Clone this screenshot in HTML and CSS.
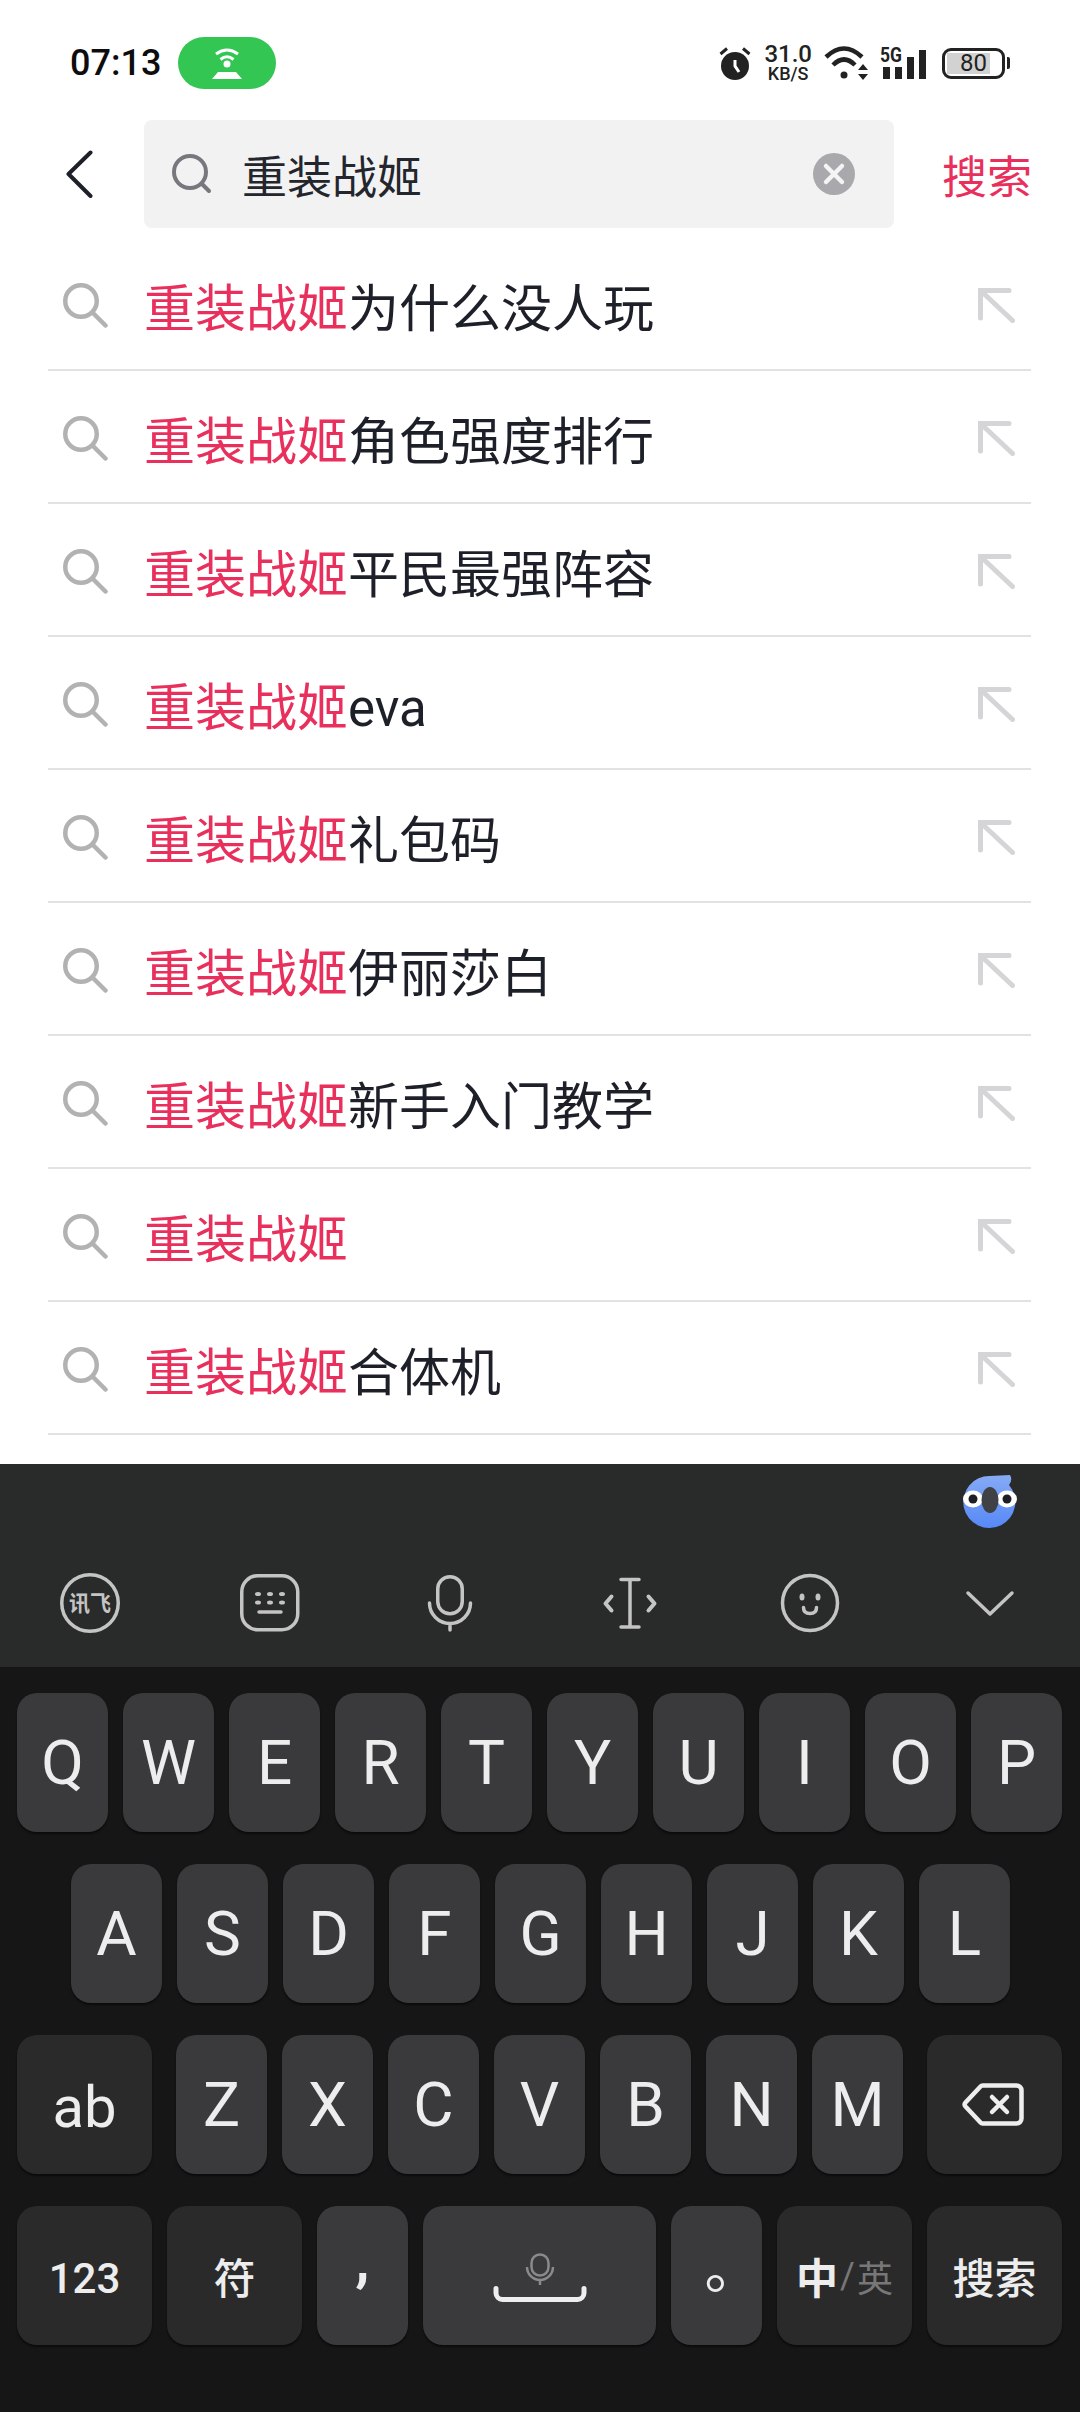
FILE: index.html
```html
<!DOCTYPE html>
<html lang="zh-CN">
<head>
    <meta charset="UTF-8">
    <meta name="viewport" content="width=device-width, initial-scale=1.0">
    <title>搜索</title>
    <link rel="stylesheet" href="styles.css">
</head>
<body>
    <svg class="sprites" aria-hidden="true">
        <symbol id="icon-search" viewBox="0 0 45 45">
            <circle cx="18" cy="18" r="15.750" fill="none" stroke="currentColor" stroke-width="4.500"/>
            <path d="M30 30L42.500 42.500" fill="none" stroke="currentColor" stroke-width="4.500" stroke-linecap="round"/>
        </symbol>
        <symbol id="icon-fill-in" viewBox="0 0 37 35">
            <path d="M2.500 30V2.500H31M2.500 2.500L34.500 32.500" fill="none" stroke="currentColor" stroke-width="5" stroke-linecap="round"/>
        </symbol>
    </svg>

    <div class="status-bar">
        <div class="status-left">
            <span class="time">07:13</span>
            <span class="hotspot-pill">
                <svg width="30" height="31" viewBox="0 0 30 31">
                    <path d="M4 6Q15-2 26 6M8.500 11.500Q15 6 21.500 11.500" fill="none" stroke="#fff" stroke-width="3"/>
                    <circle cx="15" cy="16" r="3.500" fill="#fff"/>
                    <path d="M6 24H24L30 31H0Z" fill="#fff"/>
                </svg>
            </span>
        </div>
        <div class="status-right">
            <svg width="32" height="34" viewBox="0 0 32 34">
                <circle cx="16" cy="20" r="14" fill="#222"/>
                <path d="M1.500 8L8 2.500M30.500 8L24 2.500" fill="none" stroke="#222" stroke-width="3"/>
                <path d="M16 14V20L20 26" fill="none" stroke="#fff" stroke-width="3"/>
            </svg>
            <div class="speed">
                <span class="speed-num">31.0</span>
                <span class="speed-unit">KB/S</span>
            </div>
            <svg width="44" height="34" viewBox="0 0 44 34">
                <path d="M2 11Q20-6 38 11M9 19Q20 8 31 19" fill="none" stroke="#222" stroke-width="4.500"/>
                <circle cx="20" cy="29" r="3.500" fill="#222"/>
                <path d="M34 24L39 18L44 24ZM34 28L39 34L44 28Z" fill="#222"/>
            </svg>
            <svg class="signal" width="46" height="38" viewBox="0 -6 46 38">
                <text class="signal-label" x="0" y="15" textLength="22" lengthAdjust="spacingAndGlyphs">5G</text>
                <path d="M3 20H10V32H3ZM15 20H22V32H15ZM27 10H34V32H27ZM39 3H46V32H39Z" fill="#222"/>
            </svg>
            <div class="battery-wrap">
                <div class="battery">80</div>
                <span class="battery-tip"></span>
            </div>
        </div>
    </div>

    <div class="search-row">
        <svg class="back" width="27" height="48" viewBox="0 0 27 48">
            <path d="M24.500 2.500L2.500 24L24.500 46" fill="none" stroke="#1e2029" stroke-width="4" stroke-linecap="round" stroke-linejoin="round"/>
        </svg>
        <div class="search-box">
            <svg class="search-box-icon" width="40" height="40" viewBox="0 0 40 40">
                <circle cx="18" cy="18" r="16" fill="none" stroke="#77777d" stroke-width="4"/>
                <path d="M30 30L37 37" fill="none" stroke="#77777d" stroke-width="4" stroke-linecap="round"/>
            </svg>
            <span class="search-text">重装战姬</span>
            <svg class="clear" width="42" height="42" viewBox="0 0 42 42">
                <circle cx="21" cy="21" r="21" fill="#a8a8ad"/>
                <path d="M13 13L29 29M29 13L13 29" fill="none" stroke="#f4f4f5" stroke-width="4.500" stroke-linecap="round"/>
            </svg>
        </div>
        <span class="search-btn">搜索</span>
    </div>

    <ul class="suggest-list">
        <li class="suggest-item">
            <svg class="suggest-icon"><use href="#icon-search"/></svg>
            <span class="suggest-text"><em>重装战姬</em>为什么没人玩</span>
            <svg class="fill-icon"><use href="#icon-fill-in"/></svg>
        </li>
        <li class="suggest-item">
            <svg class="suggest-icon"><use href="#icon-search"/></svg>
            <span class="suggest-text"><em>重装战姬</em>角色强度排行</span>
            <svg class="fill-icon"><use href="#icon-fill-in"/></svg>
        </li>
        <li class="suggest-item">
            <svg class="suggest-icon"><use href="#icon-search"/></svg>
            <span class="suggest-text"><em>重装战姬</em>平民最强阵容</span>
            <svg class="fill-icon"><use href="#icon-fill-in"/></svg>
        </li>
        <li class="suggest-item">
            <svg class="suggest-icon"><use href="#icon-search"/></svg>
            <span class="suggest-text"><em>重装战姬</em>eva</span>
            <svg class="fill-icon"><use href="#icon-fill-in"/></svg>
        </li>
        <li class="suggest-item">
            <svg class="suggest-icon"><use href="#icon-search"/></svg>
            <span class="suggest-text"><em>重装战姬</em>礼包码</span>
            <svg class="fill-icon"><use href="#icon-fill-in"/></svg>
        </li>
        <li class="suggest-item">
            <svg class="suggest-icon"><use href="#icon-search"/></svg>
            <span class="suggest-text"><em>重装战姬</em>伊丽莎白</span>
            <svg class="fill-icon"><use href="#icon-fill-in"/></svg>
        </li>
        <li class="suggest-item">
            <svg class="suggest-icon"><use href="#icon-search"/></svg>
            <span class="suggest-text"><em>重装战姬</em>新手入门教学</span>
            <svg class="fill-icon"><use href="#icon-fill-in"/></svg>
        </li>
        <li class="suggest-item">
            <svg class="suggest-icon"><use href="#icon-search"/></svg>
            <span class="suggest-text"><em>重装战姬</em></span>
            <svg class="fill-icon"><use href="#icon-fill-in"/></svg>
        </li>
        <li class="suggest-item">
            <svg class="suggest-icon"><use href="#icon-search"/></svg>
            <span class="suggest-text"><em>重装战姬</em>合体机</span>
            <svg class="fill-icon"><use href="#icon-fill-in"/></svg>
        </li>
    </ul>

    <div class="keyboard">
        <div class="toolbar">
            <div class="mascot-row">
                <svg width="54" height="54" viewBox="0 0 54 54">
                    <defs>
                        <linearGradient id="mascot-blue" x1="0" y1="0" x2="0" y2="1">
                            <stop offset="0" stop-color="#86aaf5"/>
                            <stop offset="1" stop-color="#5689f7"/>
                        </linearGradient>
                    </defs>
                    <path d="M27 1L47 0Q50 5 46 10A26 26 0 1 1 27 1Z" fill="url(#mascot-blue)"/>
                    <ellipse cx="10" cy="24" rx="10" ry="8.500" fill="#fff"/>
                    <ellipse cx="44" cy="24" rx="10" ry="8.500" fill="#fff"/>
                    <circle cx="10" cy="24" r="4.500" fill="#1d1f24"/>
                    <circle cx="44" cy="24" r="4.500" fill="#1d1f24"/>
                    <ellipse cx="27" cy="25" rx="8.500" ry="13" fill="#3f4145"/>
                </svg>
            </div>
            <div class="tool-row">
                <svg class="tool-icon" viewBox="0 0 60 60">
                    <circle cx="30" cy="30" r="28.250" fill="none" stroke="#c4c4c4" stroke-width="3.500"/>
                    <text class="ifly-label" x="30" y="38" text-anchor="middle" textLength="42" lengthAdjust="spacingAndGlyphs">讯飞</text>
                </svg>
                <svg class="tool-icon" viewBox="0 0 60 60">
                    <rect x="1.750" y="2.750" width="56" height="54" rx="16" fill="none" stroke="#c4c4c4" stroke-width="3.500"/>
                    <g fill="#c4c4c4">
                        <ellipse cx="18" cy="21" rx="3" ry="2"/>
                        <ellipse cx="30" cy="21" rx="3" ry="2"/>
                        <ellipse cx="42" cy="21" rx="3" ry="2"/>
                        <ellipse cx="18" cy="29.500" rx="3" ry="2"/>
                        <ellipse cx="30" cy="29.500" rx="3" ry="2"/>
                        <ellipse cx="42" cy="29.500" rx="3" ry="2"/>
                    </g>
                    <path d="M19 39H41" fill="none" stroke="#c4c4c4" stroke-width="3.500" stroke-linecap="round"/>
                </svg>
                <svg class="tool-icon" viewBox="0 0 60 60">
                    <rect x="17.750" y="3.750" width="24.500" height="37" rx="12.250" fill="none" stroke="#c4c4c4" stroke-width="3.500"/>
                    <path d="M9.500 30a20.500 20.500 0 0 0 41 0M30 50.500V57" fill="none" stroke="#c4c4c4" stroke-width="3.500" stroke-linecap="round"/>
                </svg>
                <svg class="tool-icon" viewBox="0 0 60 60">
                    <path d="M30 7V53M21 6.500H39M21 54H39" fill="none" stroke="#c4c4c4" stroke-width="3.500" stroke-linecap="round"/>
                    <path d="M11.500 23.500L5.500 30.500L11.500 37.500M48.500 23.500L54.500 30.500L48.500 37.500" fill="none" stroke="#c4c4c4" stroke-width="4" stroke-linecap="round" stroke-linejoin="round"/>
                </svg>
                <svg class="tool-icon" viewBox="0 0 60 60">
                    <circle cx="30" cy="30" r="27.500" fill="none" stroke="#c4c4c4" stroke-width="3.500"/>
                    <ellipse cx="22" cy="24" rx="2.500" ry="3.500" fill="#c4c4c4"/>
                    <ellipse cx="38" cy="24" rx="2.500" ry="3.500" fill="#c4c4c4"/>
                    <path d="M23.500 34.500q0 6 6.500 6q6.500 0 6.500-6" fill="none" stroke="#c4c4c4" stroke-width="3.500" stroke-linecap="round"/>
                </svg>
                <svg class="tool-icon" viewBox="0 0 60 60">
                    <path d="M8 20L30 41L52 20" fill="none" stroke="#c4c4c4" stroke-width="3.500" stroke-linecap="round" stroke-linejoin="round"/>
                </svg>
            </div>
        </div>

        <div class="keys">
            <div class="key-row">
                <span class="key">Q</span><span class="key">W</span><span class="key">E</span><span class="key">R</span><span class="key">T</span><span class="key">Y</span><span class="key">U</span><span class="key">I</span><span class="key">O</span><span class="key">P</span>
            </div>
            <div class="key-row key-row-inset">
                <span class="key">A</span><span class="key">S</span><span class="key">D</span><span class="key">F</span><span class="key">G</span><span class="key">H</span><span class="key">J</span><span class="key">K</span><span class="key">L</span>
            </div>
            <div class="key-row">
                <span class="key key-fn key-shift">ab</span>
                <span class="key">Z</span><span class="key">X</span><span class="key">C</span><span class="key">V</span><span class="key">B</span><span class="key">N</span><span class="key">M</span>
                <span class="key key-fn key-del">
                    <svg width="62" height="43" viewBox="0 0 62 43">
                        <path d="M21 2.500H54.500a5 5 0 0 1 5 5V35.500a5 5 0 0 1-5 5H21a3 3 0 0 1-2.500-1L3.500 23.500a3 3 0 0 1 0-4L18.500 3.500a3 3 0 0 1 2.500-1Z" fill="none" stroke="#eee" stroke-width="4.500"/>
                        <path d="M30 14L45 29M45 14L30 29" fill="none" stroke="#eee" stroke-width="4.500" stroke-linecap="round"/>
                    </svg>
                </span>
            </div>
            <div class="key-row">
                <span class="key key-fn key-label key-num">123</span>
                <span class="key key-fn key-label">符</span>
                <span class="key key-comma">,</span>
                <span class="key key-space">
                    <svg width="96" height="50" viewBox="0 0 96 50">
                        <rect x="39.500" y="1.500" width="17" height="21" rx="8.500" fill="none" stroke="#8a8a8a" stroke-width="2.500"/>
                        <path d="M35 14a13 13 0 0 0 26 0M48 27V32" fill="none" stroke="#8a8a8a" stroke-width="2.500"/>
                        <path d="M4 35.500V40a6.500 6.500 0 0 0 6.500 6.500H85.500a6.500 6.500 0 0 0 6.500-6.500V35.500" fill="none" stroke="#eee" stroke-width="5" stroke-linecap="round"/>
                    </svg>
                </span>
                <span class="key key-stop">。</span>
                <span class="key key-fn key-lang"><b>中</b><i>/</i><span>英</span></span>
                <span class="key key-fn key-label">搜索</span>
            </div>
        </div>
    </div>
</body>
</html>
```

FILE: styles.css
```css
* {
    box-sizing: border-box;
    margin: 0;
    padding: 0;
}

body {
    width: 1080px;
    height: 2412px;
    overflow: hidden;
    background-color: #fff;
    color: #1e2029;
    font-family: 'Roboto', 'Noto Sans CJK SC', sans-serif;
}

.sprites {
    display: none;
}

/* status bar */
.status-bar {
    display: flex;
    justify-content: space-between;
    align-items: center;
    height: 120px;
    padding: 6px 70px 0 70px;
}

.status-left {
    display: flex;
    align-items: center;
    gap: 17px;
}

.time {
    font-size: 36px;
    font-weight: 500;
    color: #0d0d0d;
}

.hotspot-pill {
    display: flex;
    justify-content: center;
    align-items: center;
    width: 98px;
    height: 52px;
    border-radius: 26px;
    background-color: #33c653;
}

.status-right {
    display: flex;
    align-items: center;
    gap: 12px;
}

.speed {
    display: flex;
    flex-direction: column;
    align-items: center;
    margin-left: 1px;
    color: #222;
    font-weight: 500;
}

.speed-num {
    font-size: 24px;
    line-height: 21px;
}

.speed-unit {
    font-size: 18px;
    line-height: 17px;
}

.signal {
    margin-top: -6px;
}

.signal-label {
    font-family: 'Roboto', sans-serif;
    font-size: 21px;
    font-weight: 700;
    fill: #222;
}

.battery-wrap {
    display: flex;
    align-items: center;
    gap: 2px;
    margin-left: 4px;
}

.battery {
    width: 63px;
    height: 31px;
    border: 3px solid #222;
    border-radius: 9px;
    background: linear-gradient(#d2d2d2, #d2d2d2) no-repeat 2px 2px / 43px 21px;
    color: #222;
    font-size: 24px;
    line-height: 25px;
    text-align: center;
}

.battery-tip {
    width: 3px;
    height: 12px;
    border-radius: 0 2px 2px 0;
    background-color: #222;
}

/* search row */
.search-row {
    display: flex;
    align-items: center;
    height: 108px;
    padding-left: 66px;
}

.search-box {
    display: flex;
    align-items: center;
    width: 750px;
    height: 108px;
    margin-left: 51px;
    padding: 0 39px 0 28px;
    border-radius: 8px;
    background-color: #f2f2f3;
}

.search-text {
    flex: 1;
    margin-left: 30px;
    font-size: 45px;
    color: #24262d;
}

.search-btn {
    margin-left: 48px;
    font-size: 45px;
    color: #e9305c;
}

/* suggestions */
.suggest-list {
    margin: 10px 49px 0 48px;
    list-style: none;
}

.suggest-item {
    display: flex;
    align-items: center;
    height: 133px;
    padding: 3px 16px 0 15px;
    border-bottom: 2px solid #e2e2e2;
}

.suggest-icon {
    flex-shrink: 0;
    width: 45px;
    height: 45px;
    color: #b2b2b2;
}

.suggest-text {
    flex: 1;
    margin-left: 36px;
    font-size: 51px;
}

.suggest-text em {
    font-style: normal;
    color: #e9305c;
}

.fill-icon {
    flex-shrink: 0;
    width: 37px;
    height: 35px;
    color: #d5d5d7;
}

/* keyboard */
.keyboard {
    height: 948px;
    margin-top: 29px;
    background-color: #161616;
}

.toolbar {
    height: 203px;
    background-color: #292b2a;
}

.mascot-row {
    display: flex;
    justify-content: flex-end;
    height: 109px;
    padding: 11px 63px 0 0;
}

.tool-row {
    display: grid;
    grid-template-columns: repeat(6, 180px);
    justify-items: center;
}

.tool-icon {
    width: 60px;
    height: 60px;
}

.ifly-label {
    font-family: 'Noto Sans CJK SC', sans-serif;
    font-size: 22px;
    font-weight: 700;
    fill: #c4c4c4;
}

.keys {
    display: flex;
    flex-direction: column;
    gap: 32px;
    padding: 26px 18px 0 17px;
}

.key-row {
    display: flex;
    gap: 15px;
}

.key-row-inset {
    padding-left: 54px;
}

.key {
    display: flex;
    justify-content: center;
    align-items: center;
    width: 91px;
    height: 139px;
    border-radius: 20px;
    background-color: #3a3a3c;
    box-shadow: 0 2px 2px rgba(0, 0, 0, 0.5);
    color: #ededed;
    font-size: 62px;
}

.key-fn {
    width: 135px;
    background-color: #2a2a2a;
}

.key-shift {
    margin-right: 9px;
    padding-top: 5px;
    font-size: 58px;
}

.key-del {
    margin-left: 9px;
    padding-right: 3px;
}

.key-label {
    font-size: 42px;
    font-weight: 500;
}

.key-num {
    padding-top: 6px;
    font-size: 42px;
}

.key-comma {
    padding-bottom: 32px;
    font-size: 58px;
    font-weight: 700;
}

.key-space {
    width: 233px;
    padding-top: 5px;
}

.key-stop {
    padding: 0 0 24px 32px;
    font-size: 56px;
}

.key-lang b {
    font-size: 42px;
    font-weight: 700;
}

.key-lang i {
    margin: 0 2px;
    color: #777;
    font-size: 36px;
    font-style: normal;
}

.key-lang span {
    color: #777;
    font-size: 36px;
}
```
